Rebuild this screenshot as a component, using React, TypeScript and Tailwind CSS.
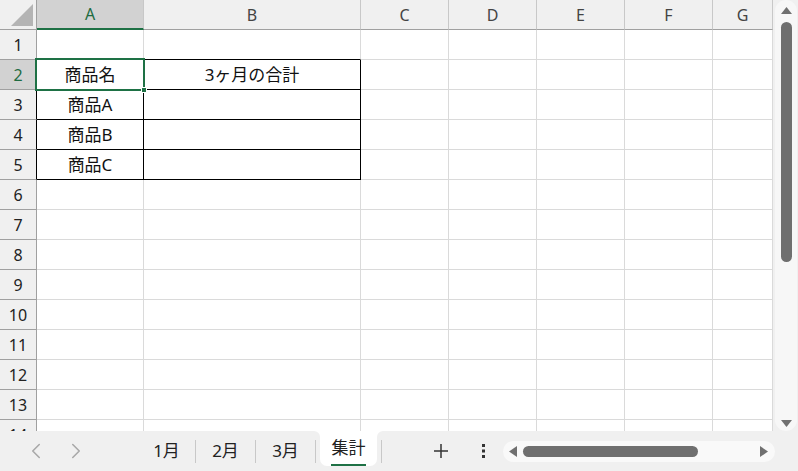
import { ChevronLeft, ChevronRight } from 'lucide-react';

const cols = [
  { key: 'A', w: 'w-[107px]' },
  { key: 'B', w: 'w-[217px]' },
  { key: 'C', w: 'w-[88px]' },
  { key: 'D', w: 'w-[88px]' },
  { key: 'E', w: 'w-[88px]' },
  { key: 'F', w: 'w-[88px]' },
  { key: 'G', w: 'w-[60px]' },
];

const data: Record<number, string[]> = {
  2: ['商品名', '3ヶ月の合計'],
  3: ['商品A', ''],
  4: ['商品B', ''],
  5: ['商品C', ''],
};

const rows = Array.from({ length: 14 }, (_, i) => i + 1);

function ColumnHeader() {
  return (
    <div className="flex h-[30px] shrink-0">
      <div className="w-[37px] h-full bg-[#f0f0f0] border-r border-b border-[#a0a0a0] flex items-end justify-end pr-[3px] pb-[3px]">
        <svg width="22" height="22" viewBox="0 0 22 22">
          <polygon points="22,0 22,22 0,22" fill="#b4b4b4" />
        </svg>
      </div>
      {cols.map(c => {
        const sel = c.key === 'A';
        return (
          <div
            key={c.key}
            className={`${c.w} h-full border-r border-[#c8c8c8] flex items-center justify-center text-[16px] ${
              sel
                ? 'bg-[#d2d2d2] text-[#1e6b41] border-b-2 border-b-[#1e7145]'
                : 'bg-[#f0f0f0] text-[#444] border-b border-b-[#a0a0a0]'
            }`}
          >
            {c.key}
          </div>
        );
      })}
    </div>
  );
}

function Row({ n }: { n: number }) {
  const inTable = n >= 2 && n <= 5;
  return (
    <div className="flex h-[30px] shrink-0">
      <div
        className={`w-[37px] h-full border-r border-b flex items-center justify-center text-[16px] ${
          n === 2 ? 'bg-[#d2d2d2] text-[#1e6b41]' : 'bg-[#f0f0f0] text-[#222]'
        } ${inTable ? 'border-r-black border-b-[#a0a0a0]' : 'border-[#a0a0a0]'}`}
      >
        {n}
      </div>
      {cols.map((c, i) => {
        const tableCol = i < 2;
        let border = 'border-[#dadada]';
        if (tableCol && inTable) border = 'border-black';
        else if (tableCol && n === 1) border = 'border-r-[#dadada] border-b-black';
        return (
          <div
            key={c.key}
            className={`${c.w} h-full border-r border-b ${border} bg-white flex items-center justify-center text-[17px] text-[#111]`}
          >
            {inTable && tableCol ? data[n][i] : ''}
          </div>
        );
      })}
    </div>
  );
}

function Tab({ label, w }: { label: string; w: string }) {
  return <div className={`${w} text-center text-[17px] text-[#222]`}>{label}</div>;
}

function Sep() {
  return <div className="w-px h-[23px] bg-[#c8c8c8]" />;
}

export default function App() {
  return (
    <div className="w-[798px] h-[471px] flex flex-col bg-[#f0f0f0] overflow-hidden font-['Noto_Sans','Noto_Sans_CJK_JP',sans-serif]">
      <div className="flex h-[431px] shrink-0">
        {/* Grid */}
        <div className="relative w-[773px] h-full overflow-hidden bg-white">
          <ColumnHeader />
          {rows.map(n => (
            <Row key={n} n={n} />
          ))}
          {/* Selection on A2 */}
          <div className="absolute left-[35px] top-[58px] w-[110px] h-[33px] border-2 border-[#1e7145]" />
          <div className="absolute left-[141px] top-[87px] w-[6px] h-[6px] bg-[#1e7145] border border-white" />
        </div>
        {/* Vertical scrollbar */}
        <div className="w-[25px] h-full bg-[#f0f0f0] pl-[2px] pr-[1px]">
          <div className="h-full rounded-full bg-[#f7f7f7] flex flex-col items-center pt-[7px] pb-[4px]">
            <svg width="11" height="7" viewBox="0 0 11 7">
              <polygon points="5.5,0 11,7 0,7" fill="#707070" />
            </svg>
            <div className="mt-[8px] w-[11px] h-[240px] rounded-full bg-[#6f6f6f]" />
            <div className="flex-1" />
            <svg width="11" height="7" viewBox="0 0 11 7">
              <polygon points="0,0 11,0 5.5,7" fill="#707070" />
            </svg>
          </div>
        </div>
      </div>

      {/* Sheet tab bar */}
      <div className="flex items-center h-[40px]">
        <div className="w-[138px] flex pl-[16px] text-[#a8a8a8]">
          <div className="w-[40px] flex justify-center">
            <ChevronLeft size={26} strokeWidth={1.4} />
          </div>
          <div className="w-[40px] flex justify-center">
            <ChevronRight size={26} strokeWidth={1.4} />
          </div>
        </div>
        <Tab label="1月" w="w-[57px]" />
        <Sep />
        <Tab label="2月" w="w-[59px]" />
        <Sep />
        <Tab label="3月" w="w-[59px]" />
        <Sep />
        <div className="w-[4px]" />
        <div className="relative self-start w-[57px] h-[35px] bg-white rounded-b-[7px] flex flex-col items-center pt-[6px]">
          <div className="absolute -left-[6px] top-0 w-[6px] h-[6px] bg-white">
            <div className="w-full h-full bg-[#f0f0f0] rounded-tr-[6px]" />
          </div>
          <div className="absolute -right-[6px] top-0 w-[6px] h-[6px] bg-white">
            <div className="w-full h-full bg-[#f0f0f0] rounded-tl-[6px]" />
          </div>
          <div className="text-[17px] leading-[22px] text-[#222]">集計</div>
          <div className="mt-[5px] w-[35px] h-[2px] bg-[#1e7145]" />
        </div>
        <div className="w-[4px]" />
        <Sep />
        <div className="w-[52px]" />
        <svg width="14" height="14" viewBox="0 0 14 14">
          <path d="M7 0V14M0 7H14" stroke="#333" strokeWidth="1.5" />
        </svg>
        <div className="w-[20px] ml-[25px] flex justify-center">
          <svg width="3" height="14" viewBox="0 0 3 14">
            <rect x="0" y="0" width="3" height="3" fill="#333" />
            <rect x="0" y="5.5" width="3" height="3" fill="#333" />
            <rect x="0" y="11" width="3" height="3" fill="#333" />
          </svg>
        </div>
        <div className="ml-[10px] w-[272px] h-[21px] rounded-full bg-[#f9f9f9] flex items-center pl-[6px] pr-[7px]">
          <svg width="8" height="11" viewBox="0 0 8 11">
            <polygon points="8,0 8,11 0,5.5" fill="#707070" />
          </svg>
          <div className="ml-[6px] w-[175px] h-[11px] rounded-full bg-[#6f6f6f]" />
          <div className="flex-1" />
          <svg width="8" height="11" viewBox="0 0 8 11">
            <polygon points="0,0 8,5.5 0,11" fill="#707070" />
          </svg>
        </div>
      </div>
    </div>
  );
}
